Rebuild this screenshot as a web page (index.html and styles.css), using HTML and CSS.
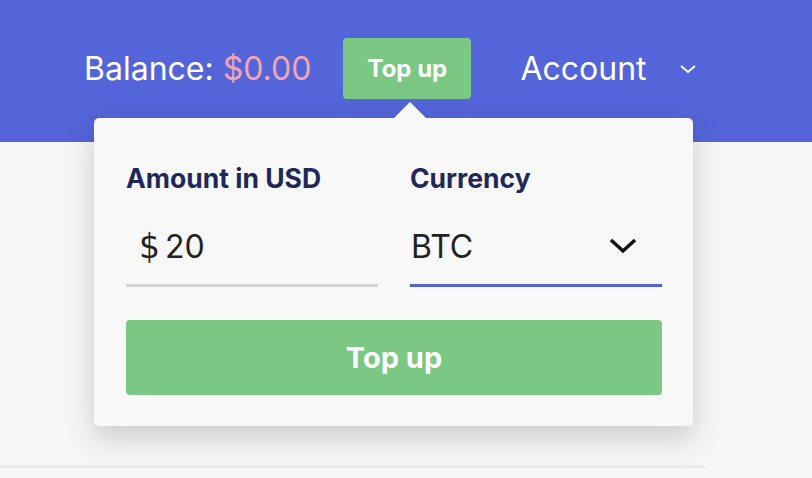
FILE: index.html
```html
<!DOCTYPE html>
<html lang="en">
<head>
    <meta charset="UTF-8">
    <meta name="viewport" content="width=device-width, initial-scale=1.0">
    <title>Top up</title>
    <link rel="stylesheet" href="styles.css">
</head>
<body>
    <div class="header">
        <div class="balance">Balance: <span class="amount">$0.00</span></div>
        <button class="topup-btn">Top up</button>
        <div class="account">Account</div>
        <svg class="account-caret" width="18" height="12" viewBox="0 0 18 12">
            <path d="M2 3 L9 9 L16 3" fill="none" stroke="#fff" stroke-width="2"/>
        </svg>

        <div class="popover">
            <div class="fields">
                <div class="field">
                    <label>Amount in USD</label>
                    <div class="input">
                        <span class="currency-sign">$</span>
                        <span>20</span>
                    </div>
                </div>
                <div class="field">
                    <label>Currency</label>
                    <div class="input select">
                        <span>BTC</span>
                        <svg width="30" height="18" viewBox="0 0 30 18">
                            <path d="M3 3 L15 14 L27 3" fill="none" stroke="#111" stroke-width="3.5"/>
                        </svg>
                    </div>
                </div>
            </div>
            <button class="submit-btn">Top up</button>
        </div>
    </div>

    <div class="content"></div>
</body>
</html>
```

FILE: styles.css
```css
body {
    margin: 0;
    font-family: Inter, 'Noto Sans', sans-serif;
    background-color: #f6f6f7;
}
.header {
    position: relative;
    height: 142px;
    background-color: #5365d8;
    display: flex;
    align-items: center;
    padding: 0 0 6px 84px;
    box-sizing: border-box;
    color: #fff;
}
.balance, .account {
    font-size: 32px;
    font-weight: 400;
}
.amount {
    color: #f0a5b0;
}
.topup-btn {
    margin-left: 32px;
    width: 128px;
    height: 61px;
    background-color: #7bc884;
    color: #fff;
    border: none;
    border-radius: 4px;
    font-family: Inter, sans-serif;
    font-size: 24px;
    font-weight: 700;
}
.account {
    margin-left: 49px;
}
.account-caret {
    margin-left: 32px;
    margin-top: 2px;
}
.popover {
    position: absolute;
    left: 94px;
    top: 118px;
    width: 599px;
    height: 308px;
    box-sizing: border-box;
    padding: 44px 31px 0 32px;
    background-color: #f8f8f9;
    border-radius: 5px;
    box-shadow: 0 12px 30px rgba(0,0,0,0.18);
    color: #222;
}
.popover::before {
    content: '';
    position: absolute;
    top: -16px;
    left: 300px;
    border-left: 16px solid transparent;
    border-right: 16px solid transparent;
    border-bottom: 16px solid #f8f8f9;
}
.fields {
    display: flex;
    gap: 32px;
}
.field {
    flex: 1;
}
.field label {
    display: block;
    font-size: 26.5px;
    font-weight: 700;
    color: #1f2858;
    line-height: 32px;
}
.input {
    display: flex;
    align-items: center;
    height: 93px;
    box-sizing: border-box;
    padding-top: 14px;
    font-size: 32px;
    border-bottom: 3px solid #d2d2d2;
    padding-left: 13px;
}
.currency-sign {
    font-family: 'DejaVu Sans', sans-serif;
    font-size: 33px;
    margin-right: 5px;
}
.select {
    border-bottom-color: #5563d6;
    padding-left: 1px;
    justify-content: space-between;
    padding-right: 24px;
}
.submit-btn {
    display: block;
    width: 100%;
    height: 75px;
    margin-top: 33px;
    background-color: #7bc884;
    color: #fff;
    border: none;
    border-radius: 4px;
    font-family: Inter, sans-serif;
    font-size: 29px;
    font-weight: 700;
}
.content {
    margin-top: 323px;
    width: 705px;
    border-top: 3px solid #ebebeb;
}
```
